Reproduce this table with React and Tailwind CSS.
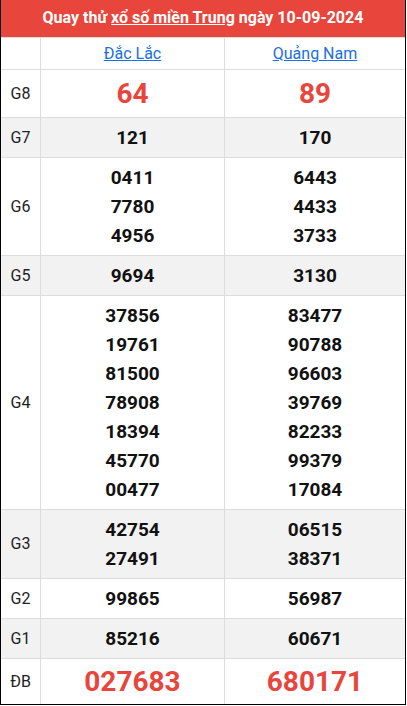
const rows = [
  { label: 'G8', a: ['64'], b: ['89'], big: true, h: 'h-[48px]' },
  { label: 'G7', a: ['121'], b: ['170'], gray: true },
  { label: 'G6', a: ['0411', '7780', '4956'], b: ['6443', '4433', '3733'] },
  { label: 'G5', a: ['9694'], b: ['3130'], gray: true },
  {
    label: 'G4',
    a: ['37856', '19761', '81500', '78908', '18394', '45770', '00477'],
    b: ['83477', '90788', '96603', '39769', '82233', '99379', '17084'],
  },
  { label: 'G3', a: ['42754', '27491'], b: ['06515', '38371'], gray: true },
  { label: 'G2', a: ['99865'], b: ['56987'] },
  { label: 'G1', a: ['85216'], b: ['60671'], gray: true },
  { label: 'ĐB', a: ['027683'], b: ['680171'], big: true, last: true, h: 'h-[45px]' },
]

function Numbers({ values, big }) {
  return (
    <div className="flex flex-col items-center justify-center py-[5px]">
      {values.map((v) =>
        big ? (
          <span key={v} className="text-[28px] font-bold leading-[34px] text-[#e8453c]">
            {v}
          </span>
        ) : (
          <span key={v} className="text-[19px] font-bold leading-[29px] text-[#111]">
            {v}
          </span>
        ),
      )}
    </div>
  )
}

export default function App() {
  return (
    <div className="w-[406px] border-x border-b border-black bg-white font-['Roboto',sans-serif]">
      <div className="flex h-[38px] items-center justify-center border-b border-[#ddd] bg-[#e8453c] pb-px text-[16px] font-bold text-white">
        Quay thử&nbsp;<a href="#" className="underline">xổ số miền Trung</a>&nbsp;ngày 10-09-2024
      </div>

      <div className="grid h-[32px] grid-cols-[40px_184px_1fr] border-b border-[#ddd]">
        <div className="border-r border-[#ddd]" />
        <div className="flex items-center justify-center border-r border-[#ddd]">
          <a href="#" className="text-[16px] text-[#1a6fe0] underline">Đắc Lắc</a>
        </div>
        <div className="flex items-center justify-center">
          <a href="#" className="text-[16px] text-[#1a6fe0] underline">Quảng Nam</a>
        </div>
      </div>

      {rows.map((r) => (
        <div
          key={r.label}
          className={[
            'grid grid-cols-[40px_184px_1fr]',
            r.last ? '' : 'border-b border-[#ddd]',
            r.gray ? 'bg-[#f2f2f2]' : 'bg-white',
            r.h || '',
          ].join(' ')}
        >
          <div className="flex items-center justify-center border-r border-[#ddd] text-[16px] text-[#222]">
            {r.label}
          </div>
          <div className="flex items-center justify-center border-r border-[#ddd]">
            <Numbers values={r.a} big={r.big} />
          </div>
          <div className="flex items-center justify-center">
            <Numbers values={r.b} big={r.big} />
          </div>
        </div>
      ))}
    </div>
  )
}
